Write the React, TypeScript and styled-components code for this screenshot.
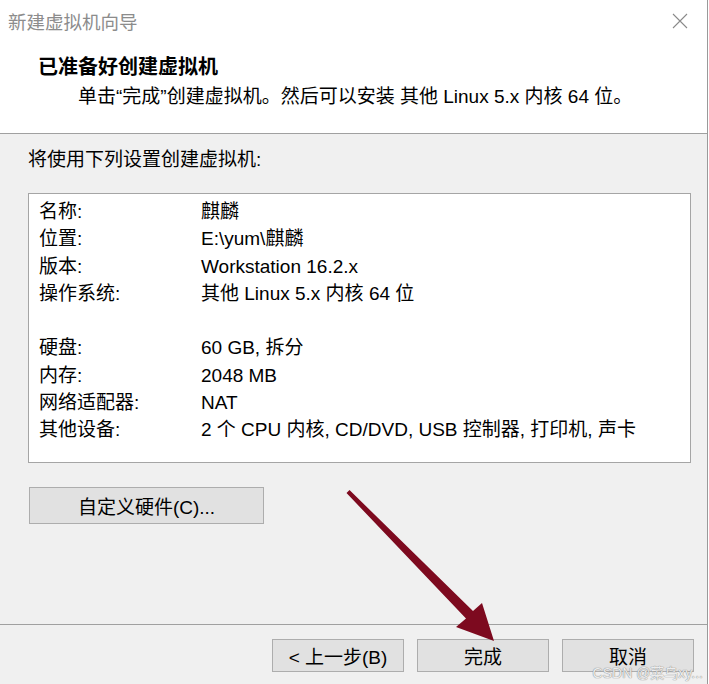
import React from "react";
import styled, { createGlobalStyle } from "styled-components";

const Global = createGlobalStyle`
  html, body { margin: 0; padding: 0; background: #ffffff; }
  body { font-family: "Liberation Sans", "Noto Sans CJK SC", sans-serif; }
  * { box-sizing: border-box; }
`;

const Window = styled.div`
  position: relative;
  width: 708px;
  height: 684px;
  border-right: 1px solid #9a9a9a;
  display: flex;
  flex-direction: column;
  background: #f0f0f0;
  font-family: "Liberation Sans", "Noto Sans CJK SC", sans-serif;
  color: #000;
  overflow: hidden;
`;

const Header = styled.div`
  height: 134px;
  background: #ffffff;
  border-bottom: 1px solid #a0a0a0;
  display: flex;
  flex-direction: column;
`;

const TitleBar = styled.div`
  height: 42px;
  display: flex;
  align-items: center;
  justify-content: space-between;
  padding: 0 18px 0 8px;
`;

const TitleText = styled.span`
  font-size: 18.5px;
  color: #8c8c8c;
`;

const CloseBtn = styled.span`
  width: 18px;
  height: 18px;
  display: flex;
  align-items: center;
  justify-content: center;
`;

const HeaderBody = styled.div`
  padding: 13px 0 0 38px;
  display: flex;
  flex-direction: column;
  gap: 6px;
`;

const Heading = styled.div`
  font-size: 20px;
  font-weight: 700;
  line-height: 24px;
`;

const Subtitle = styled.div`
  font-size: 19px;
  line-height: 24px;
  padding-left: 40px;
`;

const Body = styled.div`
  height: 490px;
  padding: 14px 0 0 28px;
  display: flex;
  flex-direction: column;
`;

const Intro = styled.div`
  font-size: 19px;
  line-height: 24px;
`;

const ListBox = styled.div`
  margin-top: 21px;
  width: 663px;
  height: 270px;
  background: #ffffff;
  border: 1px solid #a5a5a5;
  padding: 4px 0 0 10px;
`;

const Row = styled.div<{ $gap?: boolean }>`
  display: grid;
  grid-template-columns: 162px 1fr;
  font-size: 19px;
  line-height: 27.3px;
  height: 27.3px;
  white-space: nowrap;
  margin-top: ${(p) => (p.$gap ? "27.3px" : "0")};
`;

const Button = styled.button<{ $w: number; $h: number }>`
  width: ${(p) => p.$w}px;
  height: ${(p) => p.$h}px;
  background: #e1e1e1;
  border: 1px solid #adadad;
  font-family: inherit;
  font-size: 19px;
  color: #000;
  padding: 0;
  display: flex;
  align-items: center;
  justify-content: center;
`;

const CustomRow = styled.div`
  margin-top: 24px;
  padding-left: 1px;
`;

const Footer = styled.div`
  flex: 1;
  border-top: 1px solid #a0a0a0;
  display: flex;
  justify-content: flex-end;
  align-items: flex-start;
  gap: 13px;
  padding: 14px 13px 0 0;
`;

const ArrowLayer = styled.svg`
  position: absolute;
  left: 0;
  top: 0;
  width: 708px;
  height: 684px;
  pointer-events: none;
`;

const Watermark = styled.span`
  position: absolute;
  right: 4px;
  bottom: 3px;
  font-size: 14px;
  line-height: 16px;
  color: rgba(255, 255, 255, 0.85);
  text-shadow: 0 0 1px #8a8a8a, 0 0 1px #8a8a8a;
  font-family: "Liberation Sans", "Noto Sans CJK SC", sans-serif;
  pointer-events: none;
`;

const rows1 = [
  ["名称:", "麒麟"],
  ["位置:", "E:\\yum\\麒麟"],
  ["版本:", "Workstation 16.2.x"],
  ["操作系统:", "其他 Linux 5.x 内核 64 位"],
];
const rows2 = [
  ["硬盘:", "60 GB, 拆分"],
  ["内存:", "2048 MB"],
  ["网络适配器:", "NAT"],
  ["其他设备:", "2 个 CPU 内核, CD/DVD, USB 控制器, 打印机, 声卡"],
];

export default function App() {
  return (
    <>
      <Global />
      <Window>
        <Header>
          <TitleBar>
            <TitleText>新建虚拟机向导</TitleText>
            <CloseBtn>
              <svg width="16" height="16" viewBox="0 0 16 16">
                <path d="M1 1 L15 15 M15 1 L1 15" stroke="#8a8a8a" strokeWidth="1.1" fill="none" />
              </svg>
            </CloseBtn>
          </TitleBar>
          <HeaderBody>
            <Heading>已准备好创建虚拟机</Heading>
            <Subtitle>单击“完成”创建虚拟机。然后可以安装 其他 Linux 5.x 内核 64 位。</Subtitle>
          </HeaderBody>
        </Header>
        <Body>
          <Intro>将使用下列设置创建虚拟机:</Intro>
          <ListBox>
            {rows1.map(([k, v]) => (
              <Row key={k}>
                <span>{k}</span>
                <span>{v}</span>
              </Row>
            ))}
            {rows2.map(([k, v], i) => (
              <Row key={k} $gap={i === 0}>
                <span>{k}</span>
                <span>{v}</span>
              </Row>
            ))}
          </ListBox>
          <CustomRow>
            <Button $w={235} $h={37}>自定义硬件(C)...</Button>
          </CustomRow>
        </Body>
        <Footer>
          <Button $w={132} $h={33}>&lt; 上一步(B)</Button>
          <Button $w={132} $h={33}>完成</Button>
          <Button $w={132} $h={33}>取消</Button>
        </Footer>
        <ArrowLayer viewBox="0 0 708 684">
          <polygon
            points="349.5,490 473,611 482,603 494,641 456,627 466,618.5 346.5,493"
            fill="#7d0a1f"
          />
        </ArrowLayer>
        <Watermark>CSDN @菜鸟xy...</Watermark>
      </Window>
    </>
  );
}
